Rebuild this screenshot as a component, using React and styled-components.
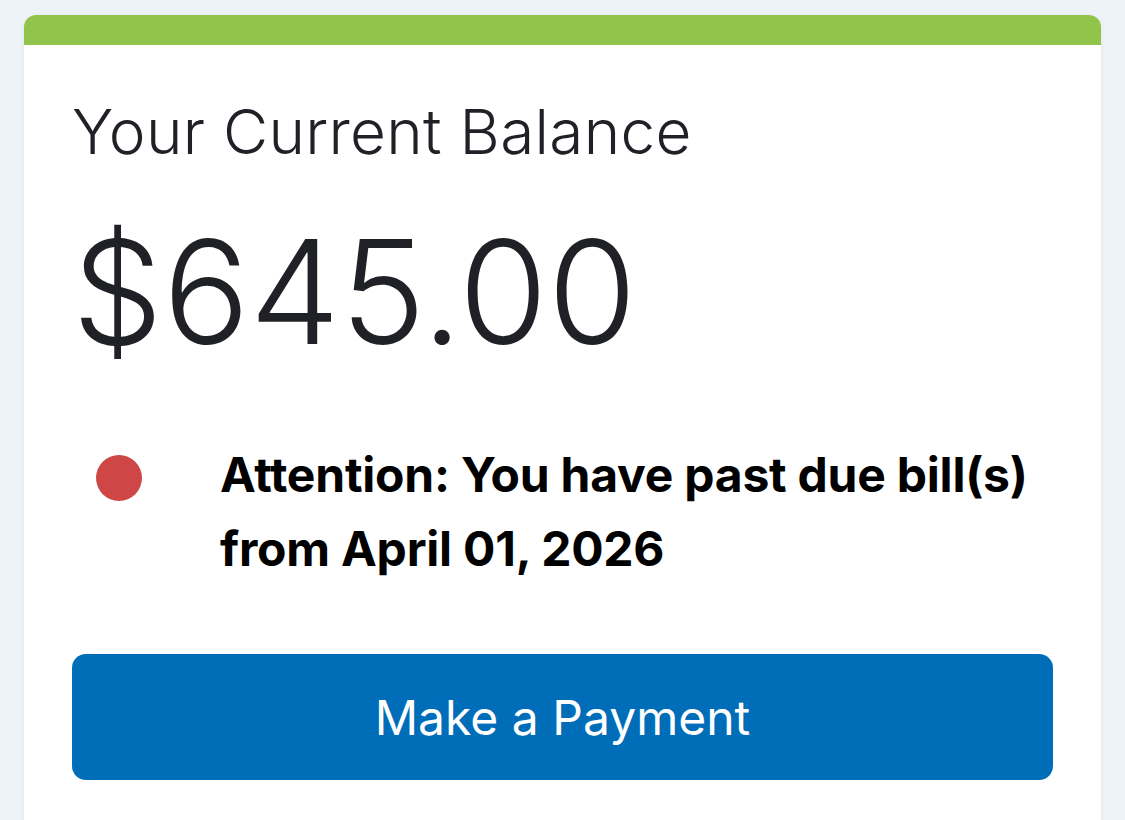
import { createGlobalStyle } from "styled-components";
import styled from "styled-components";

const GlobalStyle = createGlobalStyle`
  html, body {
    margin: 0;
    padding: 0;
    background: #eef3f7;
    font-family: "Inter", "Liberation Sans", sans-serif;
  }
  * {
    box-sizing: border-box;
  }
`;

const Page = styled.div`
  padding: 15px 24px 0 24px;
  min-height: 820px;
  overflow: hidden;
`;

const Card = styled.section`
  background: #ffffff;
  border-radius: 12px 12px 0 0;
  overflow: hidden;
  box-shadow: 0 1px 4px rgba(40, 60, 80, 0.08);
  min-height: 900px;
`;

const AccentBar = styled.div`
  height: 30px;
  background: ${(p) => p.color};
`;

const Body = styled.div`
  padding: 50px 48px 48px 48px;
  display: flex;
  flex-direction: column;
`;

const Title = styled.h2`
  margin: 0;
  font-size: 62px;
  font-weight: 300;
  line-height: 74px;
  color: #1f2126;
  letter-spacing: 0.3px;
`;

const Amount = styled.div`
  margin-top: 51px;
  font-size: 144px;
  font-weight: 300;
  line-height: 144px;
  color: #1f2126;
`;

const Alert = styled.div`
  margin-top: 74px;
  display: flex;
  align-items: flex-start;
`;

const Dot = styled.span`
  flex: none;
  width: 46px;
  height: 46px;
  border-radius: 50%;
  background: ${(p) => p.color};
  margin: 17px 78px 0 24px;
`;

const AlertText = styled.p`
  margin: 0;
  font-size: 48px;
  font-weight: 700;
  line-height: 74px;
  color: #000000;
  letter-spacing: -0.22px;
`;

const PayButton = styled.button`
  margin-top: 68px;
  height: 126px;
  width: 100%;
  border: none;
  border-radius: 14px;
  background: #006db8;
  color: #ffffff;
  font-family: inherit;
  font-size: 48px;
  font-weight: 400;
  cursor: pointer;
`;

export default function App() {
  return (
    <>
      <GlobalStyle />
      <Page>
        <Card>
          <AccentBar color="#92c44b" />
          <Body>
            <Title>Your Current Balance</Title>
            <Amount>$645.00</Amount>
            <Alert>
              <Dot color="#cf4646" />
              <AlertText>
                Attention: You have past due bill(s)
                <br />
                from April 01, 2026
              </AlertText>
            </Alert>
            <PayButton>Make a Payment</PayButton>
          </Body>
        </Card>
      </Page>
    </>
  );
}
